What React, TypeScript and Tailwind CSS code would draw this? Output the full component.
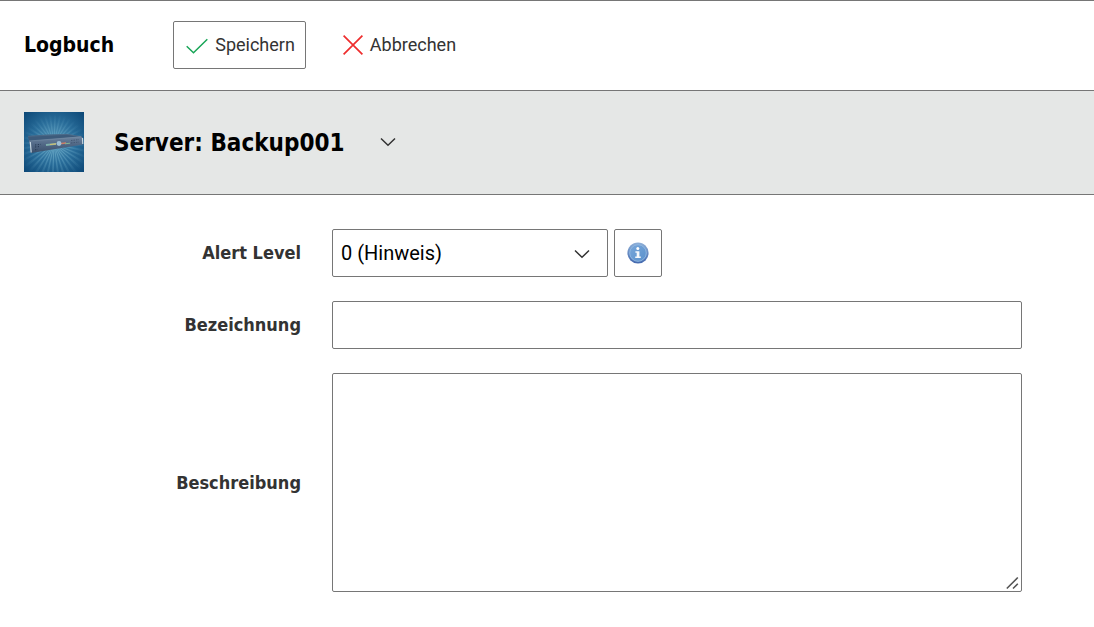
import { useState } from 'react'

function CheckIcon() {
  return (
    <svg width="22" height="22" viewBox="0 0 22 22" fill="none" stroke="#18a557" strokeWidth="1.5" aria-hidden="true">
      <path d="M.7 12.3 7.5 18.8 21.3 5.3" />
    </svg>
  )
}

function CrossIcon() {
  return (
    <svg width="20" height="20" viewBox="0 0 20 20" fill="none" stroke="#ee2d2d" strokeWidth="1.7" aria-hidden="true">
      <path d="M.6.6 19.4 19.4M19.4.6.6 19.4" />
    </svg>
  )
}

function ChevronIcon({ className = '' }: { className?: string }) {
  return (
    <svg width="16" height="10" viewBox="0 0 16 10" fill="none" stroke="#333" strokeWidth="1.5" className={className} aria-hidden="true">
      <path d="M1 1.5 8 8.3 15 1.5" />
    </svg>
  )
}

function InfoIcon() {
  return (
    <svg width="22" height="22" viewBox="0 0 22 22" aria-hidden="true">
      <defs>
        <linearGradient id="info-ring" x1="0" y1="0" x2="0" y2="1">
          <stop offset="0" stopColor="#8fb0d8" />
          <stop offset="1" stopColor="#4268ae" />
        </linearGradient>
        <linearGradient id="info-fill" x1="0" y1="0" x2="1" y2="1">
          <stop offset="0" stopColor="#78a6d9" />
          <stop offset="1" stopColor="#5b92cd" />
        </linearGradient>
      </defs>
      <circle cx="11" cy="11" r="10.6" fill="url(#info-ring)" />
      <circle cx="11" cy="11" r="8.3" fill="url(#info-fill)" stroke="#8fb8e2" strokeWidth="1" />
      <circle cx="10.8" cy="6.6" r="1.5" fill="#fff" />
      <path d="M8.4 9.2h4v5.2h1.4v1.6H8.2v-1.6h1.5v-3.7H8.4z" fill="#f4f7fb" />
    </svg>
  )
}

const rays = Array.from({ length: 36 }, (_, i) => {
  const a = (i * Math.PI) / 18
  const b = a + 0.075
  return `M30 32L${30 + 50 * Math.cos(a)} ${32 + 50 * Math.sin(a)}L${30 + 50 * Math.cos(b)} ${32 + 50 * Math.sin(b)}z`
}).join('')

function ServerImage() {
  return (
    <svg width="60" height="60" viewBox="0 0 60 60" role="img" aria-label="Server">
      <defs>
        <radialGradient id="srv-bg" cx=".5" cy=".5" r=".72">
          <stop offset="0" stopColor="#5c9dbd" />
          <stop offset=".5" stopColor="#286c99" />
          <stop offset="1" stopColor="#0b4675" />
        </radialGradient>
        <radialGradient id="srv-ray" gradientUnits="userSpaceOnUse" cx="30" cy="36" r="34">
          <stop offset="0" stopColor="#a5e0f0" stopOpacity=".4" />
          <stop offset="1" stopColor="#a5e0f0" stopOpacity="0" />
        </radialGradient>
        <linearGradient id="srv-front" x1="0" y1="0" x2="0" y2="1">
          <stop offset="0" stopColor="#6d849f" />
          <stop offset=".5" stopColor="#506785" />
          <stop offset="1" stopColor="#3a4e69" />
        </linearGradient>
      </defs>
      <path d="M0 0h60v60H0z" fill="url(#srv-bg)" />
      <path d={rays} fill="url(#srv-ray)" />
      <path d="M4 24 20 22.7 43 22 58 24.5 58 27 5 30z" fill="#3d5b7b" />
      <path d="M4 24.3 43 22.3 58 25" fill="none" stroke="#55728f" strokeWidth=".6" />
      <path d="M5 29 57 24.5 59 26 59 32.5 7 41z" fill="url(#srv-front)" />
      <path d="M5 29 57 24.8" stroke="#7890a8" strokeWidth=".6" />
      <path d="M6.3 30 7.2 40.5M58.5 26 58.8 32" stroke="#c5d5e0" strokeWidth="1.2" />
      <path d="M11 33 17 32.3M11 35 15 34.6M11 37.8 14 37.4" stroke="#263a54" strokeWidth="1" strokeDasharray="1.3 1.5" />
      <path d="M47 28.5 55 27.6M47 31 55 30" stroke="#3b506b" strokeWidth=".8" strokeDasharray="1.5 1" />
      <path d="M22 33 32 31.8" stroke="#7fb0ad" strokeWidth="1.8" />
      <path d="M26 32.5 32 31.8" stroke="#d3bf6d" strokeWidth="1.2" />
      <path d="M37 31.5 42 31" stroke="#d07c64" strokeWidth="1.4" />
      <path d="M41 31.8 46 31.2" stroke="#83b592" strokeWidth="1" />
      <circle cx="35" cy="31.5" r="2.4" fill="#9fc0d4" />
    </svg>
  )
}

const heading = "pt-0.5 font-['DejaVu_Sans_Condensed','DejaVu_Sans',sans-serif] font-bold text-black"
const toolButton = 'flex h-12 items-center gap-[7px] rounded-xs border pr-2.5 pl-3 text-lg'
const field = 'w-full rounded-xs border border-[#767676] bg-white text-xl text-black'
const label = "text-right font-['DejaVu_Sans_Condensed','DejaVu_Sans',sans-serif] text-lg font-bold text-[#333]"

export default function App() {
  const [level, setLevel] = useState('0')
  const [name, setName] = useState('')
  const [description, setDescription] = useState('')

  return (
    <div className="min-h-screen bg-white font-[Roboto,sans-serif] text-[#333]">
      <header className="flex items-center gap-[59px] border-y border-[#767676] px-6 pt-5 pb-[21px]">
        <h1 className={`${heading} text-[21px]`}>Logbuch</h1>
        <div className="flex items-center gap-6">
          <button type="submit" form="log-form" className={`${toolButton} border-[#767676]`}>
            <CheckIcon />
            Speichern
          </button>
          <button type="button" className={`${toolButton} border-transparent`}>
            <CrossIcon />
            Abbrechen
          </button>
        </div>
      </header>

      <section className="flex items-center border-b border-[#767676] bg-[#e5e7e6] px-6 pt-[21px] pb-[22px]">
        <ServerImage />
        <h2 className={`${heading} ml-[30px] text-2xl`}>Server: Backup001</h2>
        <button type="button" aria-label="Server" className="ml-7 p-2">
          <ChevronIcon />
        </button>
      </section>

      <form
        id="log-form"
        onSubmit={(e) => e.preventDefault()}
        className="grid grid-cols-[277px_1fr] items-center gap-x-[31px] gap-y-6 py-[34px] pr-[72px] pl-6"
      >
        <label htmlFor="level" className={label}>Alert Level</label>
        <div className="flex gap-1.5">
          <div className="relative w-[276px]">
            <select id="level" value={level} onChange={(e) => setLevel(e.target.value)} className={`${field} h-12 appearance-none px-2`}>
              <option value="0">0 (Hinweis)</option>
            </select>
            <ChevronIcon className="pointer-events-none absolute top-5 right-[18px]" />
          </div>
          <button type="button" aria-label="Info" className="flex size-12 items-center justify-center rounded-xs border border-[#767676]">
            <InfoIcon />
          </button>
        </div>

        <label htmlFor="name" className={label}>Bezeichnung</label>
        <input id="name" type="text" value={name} onChange={(e) => setName(e.target.value)} className={`${field} h-12 px-2`} />

        <label htmlFor="description" className={label}>Beschreibung</label>
        <div className="relative flex">
          <textarea
            id="description"
            value={description}
            onChange={(e) => setDescription(e.target.value)}
            className={`${field} min-h-[219px] resize-none px-2 py-1`}
          />
          <svg width="14" height="14" viewBox="0 0 14 14" stroke="#555" strokeWidth="1.6" className="pointer-events-none absolute right-0.5 bottom-0.5" aria-hidden="true">
            <path d="M.8 12.5 11.8 1.5M7 12.5 11.8 7.7" />
          </svg>
        </div>
      </form>
    </div>
  )
}
